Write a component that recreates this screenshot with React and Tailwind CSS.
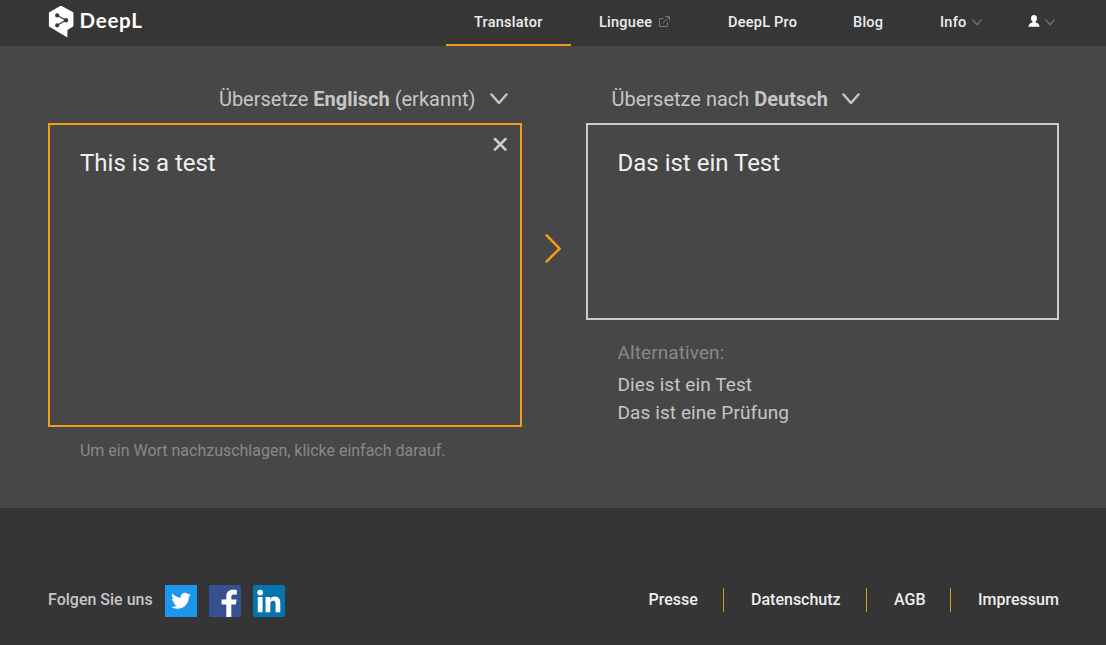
function Chevron({ className, width = 2.4 }) {
  return (
    <svg viewBox="0 0 18 12" className={className} fill="none" stroke="currentColor" strokeWidth={width} strokeLinecap="round" strokeLinejoin="round">
      <path d="M1.5 1.5 L9 10 L16.5 1.5" />
    </svg>
  );
}

function Logo() {
  return (
    <a className="ml-12 flex h-[46px] w-[100px] items-start">
      <svg viewBox="0 0 26 33" className="mt-[5px] h-[33px] w-[26px] shrink-0">
        <path fill="#fff" d="M12.2 1.1 Q13 .7 13.8 1.1 L24.7 7.1 Q25.4 7.6 25.4 8.4 V20.4 Q25.4 21.3 24.7 21.8 L19.4 25 V32.4 L1.8 22 Q.9 21.4.9 20.4 V8.4 Q.9 7.6 1.7 7.1 Z" />
        <g stroke="#363636" strokeWidth="1.2" fill="none">
          <path d="M9.2 10.4 L18 15.3 L9.2 20.2" />
        </g>
        <g fill="#363636">
          <circle cx="9.2" cy="10.4" r="2.1" />
          <circle cx="18" cy="15.3" r="2.2" />
          <circle cx="9.2" cy="20.3" r="2.1" />
        </g>
      </svg>
      <span className="ml-[5.5px] mt-[8px] font-['Lato',sans-serif] text-[20.5px] leading-[25px] font-bold tracking-[0.75px] text-white">DeepL</span>
    </a>
  );
}

function Header() {
  const item = "flex h-[46px] items-center pl-7 shrink-0";
  return (
    <header className="flex h-[46px] justify-between bg-[#363636]">
      <Logo />
      <nav className="flex w-[660px] text-[14.5px] leading-[22px] font-medium tracking-[0.25px] text-[#eeeeee]">
        <a className="flex h-[46px] w-[125px] shrink-0 items-center border-b-2 border-[#f29b18] pt-[2px] pl-7">Translator</a>
        <a className={item + " w-[129px]"}>
          Linguee
          <svg viewBox="0 0 11 11" className="-mt-[3px] ml-[7px] h-[11px] w-[11px]" fill="none" stroke="#777" strokeWidth="1">
            <path d="M4.5 2.5 H.5 V10.5 H8.5 V6.5 M3.5 7.5 L10.3 .7 M6.5 .5 H10.5 V4.5" />
          </svg>
        </a>
        <a className={item + " w-[125px]"}>DeepL Pro</a>
        <a className={item + " w-[87px]"}>Blog</a>
        <a className={item + " w-[88px]"}>
          Info
          <Chevron className="-mt-[2px] ml-[5px] h-[7px] w-[10px] text-[#6e6e6e]" width={2.6} />
        </a>
        <a className={item}>
          <svg viewBox="0 0 12 12" className="-mt-1 h-3 w-3" fill="#fff">
            <path d="M6 0 C8 0 9 1.3 9 3.2 C9 4.8 8.3 6 7.5 6.7 V7.5 C9.8 8.2 11.3 8.8 11.5 11.8 H.5 C.7 8.8 2.2 8.2 4.5 7.5 V6.7 C3.7 6 3 4.8 3 3.2 C3 1.3 4 0 6 0 Z" />
          </svg>
          <Chevron className="-mt-[2px] ml-[5px] h-[7px] w-[10px] text-[#6e6e6e]" width={2.6} />
        </a>
      </nav>
    </header>
  );
}

function SourcePanel() {
  return (
    <section className="w-[474px]">
      <div className="flex h-[45px] items-center justify-end pb-[3px] pr-[14px] text-[20px] text-[#c6c6c6]">
        <span className="whitespace-nowrap">Übersetze <b className="font-bold">Englisch</b> (erkannt)</span>
        <Chevron className="ml-[14.5px] h-3 w-[18px]" />
      </div>
      <div className="flex h-[304px] justify-between border-2 border-[#f29b18] pl-[30px]">
        <p className="mt-[22px] text-[24px] leading-8 text-[#f0f0f0]">This is a test</p>
        <svg viewBox="0 0 14 14" className="mr-[13px] mt-[12px] h-[14px] w-[14px]" stroke="#cfcfcf" strokeWidth="2.5" strokeLinecap="round">
          <path d="M1.9 2 L12.5 12.6 M12.5 2 L1.9 12.6" />
        </svg>
      </div>
      <p className="ml-8 mt-[13px] text-[16px] leading-[21px] tracking-[-0.01px] text-[#898989]">Um ein Wort nachzuschlagen, klicke einfach darauf.</p>
    </section>
  );
}

function TargetPanel() {
  return (
    <section className="w-[473px]">
      <div className="flex h-[45px] items-center pb-[3px] pl-[25.5px] text-[20px] text-[#c6c6c6]">
        <span className="whitespace-nowrap">Übersetze nach <b className="font-bold">Deutsch</b></span>
        <Chevron className="ml-[14px] h-3 w-[18px]" />
      </div>
      <div className="h-[197px] border-2 border-[#cccccc] pl-[29.5px]">
        <p className="mt-[22px] text-[24px] leading-8 text-[#f0f0f0]">Das ist ein Test</p>
      </div>
      <div className="pl-[31.5px] pt-[19px] text-[19px] leading-7 tracking-[0.09px] text-[#c6c6c6]">
        <p className="mb-1 text-[#898989]">Alternativen:</p>
        <p>Dies ist ein Test</p>
        <p>Das ist eine Prüfung</p>
      </div>
    </section>
  );
}

function Social() {
  return (
    <div className="flex items-center gap-3">
      <span className="w-[105px] whitespace-nowrap pb-[3px] text-[16px] font-medium text-[#c6c6c6]">Folgen Sie uns</span>
      <svg viewBox="0 0 32 32" className="h-8 w-8">
        <path fill="#1d96ed" d="M0 0h32v32H0z" />
        <path fill="#fff" transform="translate(6.2 6) scale(.82)" d="M23.953 4.57a10 10 0 01-2.825.775 4.958 4.958 0 002.163-2.723c-.951.555-2.005.959-3.127 1.184a4.92 4.92 0 00-8.384 4.482C7.69 8.095 4.067 6.13 1.64 3.162a4.822 4.822 0 00-.666 2.475c0 1.71.87 3.213 2.188 4.096a4.904 4.904 0 01-2.228-.616v.06a4.923 4.923 0 003.946 4.827 4.996 4.996 0 01-2.212.085 4.936 4.936 0 004.604 3.417 9.867 9.867 0 01-6.102 2.105c-.39 0-.779-.023-1.17-.067a13.995 13.995 0 007.557 2.209c9.053 0 13.998-7.496 13.998-13.985 0-.21 0-.42-.015-.63A9.935 9.935 0 0024 4.59z" />
      </svg>
      <svg viewBox="0 0 32 32" className="h-8 w-8">
        <rect width="32" height="32" rx="1.5" fill="#37508f" />
        <path fill="#fff" d="M17.3 32 V19.5 H12.6 V14.5 H17.3 V11.2 C17.3 7 20 4.8 23.9 4.8 C25.8 4.8 27.4 4.9 27.9 5 V9.4 H25.1 C22.9 9.4 22.3 10.5 22.3 12 V14.5 H27.6 L26.9 19.5 H22.3 V32 Z" />
      </svg>
      <svg viewBox="0 0 32 32" className="h-8 w-8">
        <rect width="32" height="32" rx="2" fill="#0475ae" />
        <g fill="#fff">
          <circle cx="7.2" cy="7.6" r="2.9" />
          <path d="M4.8 12 H9.6 V27.2 H4.8 Z M12.5 12 H17 V14.1 C17.8 12.7 19.4 11.6 21.7 11.6 C26.3 11.6 27.3 14.6 27.3 18.7 V27.2 H22.6 V19.8 C22.6 18 22.5 15.8 20.1 15.8 C17.7 15.8 17.3 17.7 17.3 19.7 V27.2 H12.5 Z" />
        </g>
      </svg>
    </div>
  );
}

function Footer() {
  const link = "flex h-6 shrink-0 items-center border-l border-[#e0961c] pl-[27px]";
  return (
    <footer className="flex h-[137px] justify-between bg-[#353535] pl-12 pr-[47px] pt-[77px]">
      <div className="h-8"><Social /></div>
      <nav className="mt-[3px] flex h-6 items-center whitespace-nowrap text-[16px] font-medium text-[#eeeeee]">
        <a className="w-[75px] shrink-0 pl-[0.5px]">Presse</a>
        <a className={link + " w-[143px]"}>Datenschutz</a>
        <a className={link + " w-[84px]"}>AGB</a>
        <a className={link + " w-[109px]"}>Impressum</a>
      </nav>
    </footer>
  );
}

export default function App() {
  return (
    <div className="h-[645px] w-[1106px] overflow-hidden bg-[#474747] font-['Roboto',sans-serif]">
      <Header />
      <main className="flex h-[462px] pl-12 pt-8">
        <SourcePanel />
        <div className="flex w-16 justify-center pt-[155px]">
          <svg viewBox="0 0 17 30" className="ml-[-2px] h-[30px] w-[17px]" fill="none" stroke="#f29b18" strokeWidth="2.6" strokeLinecap="round" strokeLinejoin="round">
            <path d="M1.7 2.4 L14.6 15.6 L1.7 28.4" />
          </svg>
        </div>
        <TargetPanel />
      </main>
      <Footer />
    </div>
  );
}
